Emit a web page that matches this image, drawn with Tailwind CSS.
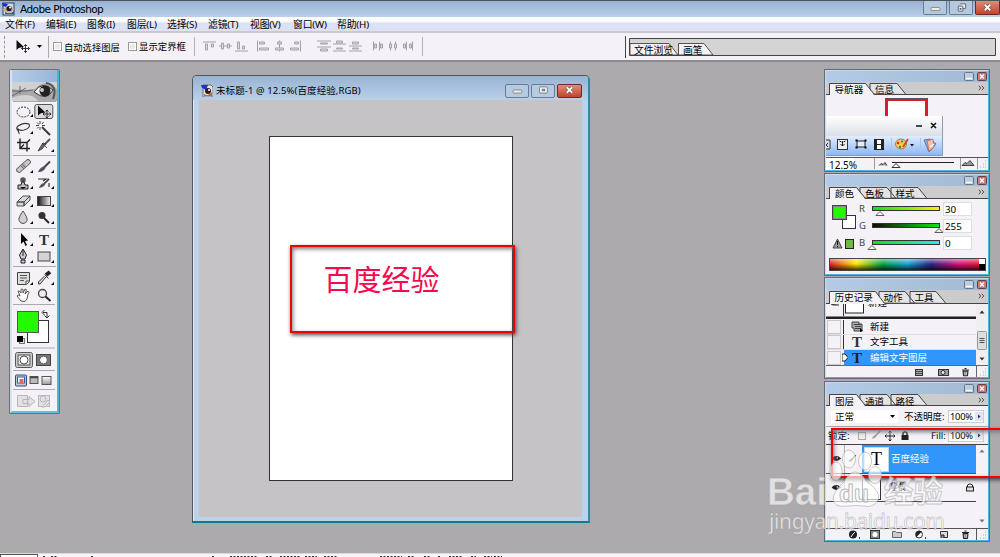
<!DOCTYPE html>
<html lang="zh-CN">
<head>
<meta charset="utf-8">
<title>Adobe Photoshop</title>
<script src="https://cdn.jsdelivr.net/npm/@tailwindcss/browser@4"></script>
</head>
<body class="h-[557px] w-[1000px] overflow-hidden bg-[#acaaac] font-['Noto_Sans','Noto_Sans_CJK_SC',sans-serif] text-[9.5px] text-black">
<svg class="absolute size-0">
  <defs>
    <linearGradient id="gm" x1="0" y1="0" x2="0" y2="1"><stop offset="0" stop-color="#fff"/><stop offset="1" stop-color="#999"/></linearGradient>
    <linearGradient id="gh"><stop offset="0" stop-color="#111"/><stop offset="1" stop-color="#f4f4f4"/></linearGradient>
    <symbol id="min" viewBox="0 0 25 13"><rect x="8" y="6.500" width="10" height="3.500" rx="1" fill="#f2ecdc" stroke="#657080" stroke-width=".8"/></symbol>
    <symbol id="max" viewBox="0 0 25 13"><rect x="8.500" y="3" width="9" height="7" rx="1" fill="#f2f2ee" stroke="#5a6472" stroke-width=".8"/><rect x="11.500" y="5.500" width="3" height="2" fill="#9ab" stroke="#5a6472" stroke-width=".7"/></symbol>
    <symbol id="cls" viewBox="0 0 25 13"><path d="M9.500 3.500l6 6M15.500 3.500l-6 6" stroke="#5a3a3a" stroke-width="3.400"/><path d="M9.500 3.500l6 6M15.500 3.500l-6 6" stroke="#fff" stroke-width="2"/></symbol>
    <symbol id="pmin" viewBox="0 0 10 9"><rect x=".5" y=".5" width="9" height="8" rx="1" fill="#bccde0" stroke="#65768c"/><path d="M2 6.500h6" stroke="#fff" stroke-width="1.500"/></symbol>
    <symbol id="pcls" viewBox="0 0 10 9"><rect x=".5" y=".5" width="9" height="8" rx="1" fill="#c97870" stroke="#64404a"/><path d="M3 2.500l4 4M7 2.500l-4 4" stroke="#fff" stroke-width="1.300"/></symbol>
    <symbol id="more" viewBox="0 0 7 6"><path d="M.8.8l2 2.200-2 2.200M3.800.8l2 2.200-2 2.200" fill="none" stroke="#444" stroke-width=".9"/></symbol>
    <symbol id="grip" viewBox="0 0 8 8"><path d="M6 1h1M4 4h1M6 4h1M1 7h1M4 7h1M6 7h1" stroke="#aaa"/></symbol>
    <symbol id="mv" viewBox="0 0 15 13"><path d="M1 0v10l2.300-2L5 7.500 8.500 7z" fill="#111"/><path d="M10 4.500v8M6 8.500h8M8.600 6L10 4.500 11.400 6M8.600 11l1.400 1.500L11.400 11M7.500 7L6 8.500 7.500 10M12.500 7L14 8.500 12.500 10" fill="none" stroke="#222" stroke-width=".9"/></symbol>
    <symbol id="eye" viewBox="0 0 10 7"><path d="M0 3Q5-2 10 3 5 8 0 3z" fill="#222"/><circle cx="6" cy="2.500" r=".8" fill="#fff"/></symbol>
    <symbol id="trash" viewBox="0 0 9 9"><path d="M1 2.500h7M3.500 1h2M2 3.500l.5 5h4l.5-5z" fill="#888" stroke="#222" stroke-width="1"/><path d="M4 4.500v3M5.500 4.500v3" stroke="#eee" stroke-width=".5"/></symbol>
    <symbol id="brush" viewBox="0 0 14 12"><path d="M13 .5L7 6.500" stroke="#444" stroke-width="2"/><path d="M7.500 5.500Q3.500 5.500 1 11q5 .5 7.500-4z" fill="#555"/></symbol>
  </defs>
</svg>

<header class="flex h-[62px] flex-col">
  <div class="flex h-[17px] items-center border-t border-[#4c535b] bg-linear-to-b from-[#98b1d1] to-[#b8d0e9] pl-[2px]">
    <svg class="h-[14px] w-[13px]" viewBox="0 0 13 14"><rect x="1" y="1" width="11" height="12" fill="#c9dcec" stroke="#345"/><path d="M0 1l6 1-2 3-3-1z" fill="#22c"/><path d="M1 8q5-8 11-1-4 7-11 1z" fill="#d9a67e"/><path d="M3 10q5 3 9-1v3H3z" fill="#2c5c92"/><circle cx="7" cy="6.500" r="2.600" fill="#18202c"/><circle cx="8" cy="5.500" r="1" fill="#fff"/></svg>
    <span class="ml-[5px] w-[100px] text-[10.500px] leading-[15px] whitespace-nowrap font-['DejaVu_Sans',sans-serif] tracking-[-0.570px]">Adobe Photoshop</span>
    <div class="ml-auto flex gap-[2px] self-start">
      <svg class="h-[14px] w-[24px] rounded-b-[2px] border border-t-0 border-[#6a7c94] bg-[#b4c9df]"><use href="#min"/></svg>
      <svg class="h-[14px] w-[24px] rounded-b-[2px] border border-t-0 border-[#6a7c94] bg-[#b4c9df]" viewBox="0 0 24 13"><path d="M11 2.500h6v5h-3M9 5h5v5.500H9z" fill="#f0f0ee" stroke="#5a6472"/><path d="M10.500 7h2v2h-2z" fill="#567"/></svg>
      <svg class="h-[14px] w-[25px] rounded-b-[2px] border border-t-0 border-[#6d2a2a] bg-linear-to-b from-[#dc8c7c] to-[#c04428]"><use href="#cls"/></svg>
    </div>
  </div>
  <nav class="flex h-[14px] items-center bg-linear-to-b from-white from-30% to-[#dce1f4] to-45% pt-[2px] pl-[5px] text-[9.800px] leading-[12px] whitespace-nowrap tracking-[-0.150px]">
    <span class="w-[41px]">文件(F)</span><span class="w-[41px]">编辑(E)</span><span class="w-[40px]">图象(I)</span><span class="w-[40px]">图层(L)</span><span class="w-[41px]">选择(S)</span><span class="w-[42px]">滤镜(T)</span><span class="w-[43px]">视图(V)</span><span class="w-[44px]">窗口(W)</span><span>帮助(H)</span>
  </nav>
  <div class="flex h-[31px] items-center border-t-[2px] border-b-[2px] border-t-[#cbc8cf] border-b-[#8d8b8e] bg-[#f5f2f7]">
    <div class="ml-[4px] h-[22px] border-l border-dashed border-[#999]"></div>
    <svg class="ml-[10px] h-[13px] w-[16px]"><use href="#mv"/></svg>
    <svg class="ml-[6px] h-[3px] w-[5px]" viewBox="0 0 5 3"><path d="M0 0h5L2.500 3z"/></svg>
    <div class="ml-[6px] h-[22px] w-px bg-[#aaa]"></div>
    <div class="ml-[4px] size-[9px] border border-[#999] bg-[#eceae8] shadow-[inset_0_0_0_1px_#fff]"></div>
    <span class="ml-[2px] w-[64px] pt-[2px] text-[9.300px] whitespace-nowrap">自动选择图层</span>
    <div class="size-[9px] border border-[#999] bg-[#eceae8] shadow-[inset_0_0_0_1px_#fff]"></div>
    <span class="ml-[2px] w-[55px] pt-[2px] text-[9.400px] whitespace-nowrap">显示定界框</span>
    <div class="h-[19px] w-px bg-[#b5b3b6]"></div>
    <svg class="h-[20px] w-[227px]" viewBox="195 36.500 227 20" fill="#dddcde" stroke="#a4a2a6">
      <path d="M203 41.500h13M219 45.500h13M235 50.500h13"/><path d="M205.500 43.500h2v6h-2zM211.500 43.500h2v3h-2zM221.500 42.500h2v6h-2zM227.500 43.500h2v4h-2zM237.500 41.500h2v7h-2zM242.500 45.500h2v3h-2z"/>
      <path d="M257.500 40v11M279.500 40v11M300.500 40v11"/><path d="M259.500 41.500h5v2h-5zM259.500 47.500h9v2h-9zM277.500 41.500h4v2h-4zM275.500 47.500h8v2h-8zM294.500 41.500h4v2h-4zM290.500 47.500h8v2h-8z"/>
      <path d="M317 40.500h14M317 46.500h14M333 43.500h13M333 50.500h13M349 45.500h13M349 50.500h13"/><path d="M320.500 42.500h7v1h-7zM320.500 48.500h7v2h-7zM336.500 40.500h6v2h-6zM336.500 47.500h6v1h-6zM352.500 41.500h6v2h-6zM352.500 47.500h6v1h-6z"/>
      <path d="M373.500 41v9M379.500 41v9M390.500 41v9M395.500 41v9M406.500 41v9M412.500 41v9"/><path d="M374.500 43.500h2v4h-2zM380.500 43.500h2v4h-2zM389.500 43.500h2v4h-2zM394.500 43.500h2v4h-2zM403.500 43.500h2v4h-2zM409.500 43.500h2v4h-2z"/>
    </svg>
    <div class="h-[19px] w-px bg-[#b5b3b6]"></div>
    <div class="ml-[202px] h-[22px] w-px bg-[#444]"></div>
    <svg class="ml-[3px] h-[19px] w-[368px]" viewBox="629 37 368 19"><path d="M629.500 38.500h366v17h-366z" fill="#d5d4d5" stroke="#444"/><path d="M630 55V43.500h39l9 11.500zM678.500 55V43.500H704l9 11.500z" fill="#f5f2f7" stroke="#444" stroke-width=".9"/><g font-size="9.800"><text x="634" y="53.500" textLength="39">文件浏览</text><text x="683" y="53.500">画笔</text></g></svg>
  </div>
</header>

<main class="relative h-[491px]">
  <!-- Toolbox -->
  <aside class="absolute top-[7px] left-[9px] flex h-[345px] w-[51px] flex-col rounded-t-[2px] border border-[#6c6f74] bg-[#f5f2f7]">
    <div class="flex grow flex-col border-r-2 border-b-2 border-l-2 border-r-[#45b6d8] border-b-[#62c0de] border-l-[#d5e4f2]">
      <div class="h-[12px] shrink-0 bg-linear-to-r from-[#b6cde8] to-[#98b5d8]"></div>
      <svg class="h-[19px] w-[45px] shrink-0" viewBox="0 0 45 19"><rect width="45" height="19" fill="#d2d1d2"/><path d="M0 7q12 2 23 0Q30-1 38 2l7 5v12H26q-4-6-12-6T0 16z" fill="#a9a8aa"/><path d="M0 9q11 1 21-1M0 14l14-8M8 4v8" stroke="#555" fill="none" stroke-width=".8"/><path d="M22 10q8-12 19-2-6 12-19 2z" fill="#eee" stroke="#333"/><circle cx="33" cy="9" r="5.500" fill="#222"/><circle cx="30" cy="8" r="2" fill="#ccc"/><path d="M34 1q12 2 7 16" fill="none" stroke="#555" stroke-width="2"/></svg>
      <div class="mx-[1px] grid grid-cols-[21px_21px] border-t border-[#aaa] pt-[1px] pb-[1px]">
        <svg class="h-[17px] w-[21px]" viewBox="0 0 21 17"><ellipse cx="10.500" cy="9" rx="6.500" ry="5" fill="none" stroke="#333" stroke-dasharray="2 1"/><path d="M20 11v3h-3z"/></svg>
        <svg class="h-[17px] w-[21px]" viewBox="0 0 21 17"><rect x=".8" y="1.500" width="18" height="14" rx="2" fill="#dcdadd" stroke="#555"/><use href="#mv" x="3" y="2.500" width="15" height="13"/></svg>
        <svg class="h-[17px] w-[21px]" viewBox="0 0 21 17"><path d="M6 11q-4-2-1-5 5-4 11-2 2 4-5 6-4 1-6-1c-2 2 2 2 1 5" fill="none" stroke="#333" stroke-width="1.100"/><path d="M20 11v3h-3z"/></svg>
        <svg class="h-[17px] w-[21px]" viewBox="0 0 21 17"><path d="M8 7l8 8" stroke="#333" stroke-width="1.800"/><path d="M6 1v3M6 7v3M2 5.500h3M8 5.500h3M3 2.500l2 2M9.500 2L8 4M3 8.500l1.500-1.500" stroke="#444"/></svg>
        <svg class="h-[17px] w-[21px]" viewBox="0 0 21 17"><path d="M7 1.500v10h10M4 5.500h10v9M14 5.500l3-3M7 11.500l4-4" fill="none" stroke="#222" stroke-width="1.400"/></svg>
        <svg class="h-[17px] w-[21px]" viewBox="0 0 21 17"><path d="M16 2l-5 5" stroke="#555" stroke-width="2"/><path d="M8 6l5 5M12 7l-4 5-4 2 3-5 2-3z" fill="#666" stroke="#333" stroke-width=".8"/><path d="M20 12v3h-3z"/></svg>
      </div>
      <div class="mx-[1px] grid grid-cols-[21px_21px] border-t border-[#aaa] pt-[2px] pb-[2px]">
        <svg class="h-[17px] w-[21px]" viewBox="0 0 21 17"><path d="M6 12l9-8" stroke="#555" stroke-width="5.600" stroke-linecap="round"/><path d="M6 12l9-8" stroke="#c8c7c9" stroke-width="4" stroke-linecap="round"/><path d="M9 9.500l3-3" stroke="#666" stroke-width="4" stroke-dasharray="1 1"/><path d="M20 12v3h-3z"/></svg>
        <svg class="h-[17px] w-[21px]" viewBox="0 0 21 17"><use href="#brush" x="3" y="3" width="14" height="12"/><path d="M20 12v3h-3z"/></svg>
        <svg class="h-[17px] w-[21px]" viewBox="0 0 21 17"><circle cx="10" cy="5" r="2.800" fill="#555"/><path d="M9 7h2l1 3h3v4H5v-4h3z" fill="#bbb" stroke="#222"/><path d="M7 12h6l-3 2z"/><path d="M20 11v3h-3z"/></svg>
        <svg class="h-[17px] w-[21px]" viewBox="0 0 21 17"><use href="#brush" x="4" y="3" width="12" height="11"/><path d="M4 4h8l-3 2M15 8v4" fill="none" stroke="#333" stroke-width="1.200"/><path d="M20 11v3h-3z"/></svg>
        <svg class="h-[17px] w-[21px]" viewBox="0 0 21 17"><path d="M4 10l6-6h7l-6 6zM4 10h7v4H4zM11 14v-4l6-6v4z" fill="#d8d7d9" stroke="#444" stroke-width=".9"/><path d="M20 12v3h-3z"/></svg>
        <svg class="h-[17px] w-[21px]" viewBox="0 0 21 17"><rect x="3.500" y="4.500" width="13" height="9" fill="url(#gh)" stroke="#444"/><path d="M20 12v3h-3z"/></svg>
        <svg class="h-[17px] w-[21px]" viewBox="0 0 21 17"><path d="M10 2q-5 7-4 9.500 1 3 4 3t4-3Q15 9 10 2z" fill="#d0cfd1" stroke="#555"/><path d="M20 12v3h-3z"/></svg>
        <svg class="h-[17px] w-[21px]" viewBox="0 0 21 17"><circle cx="8" cy="6.500" r="3.500" fill="#333"/><path d="M10 9l5 5" stroke="#222" stroke-width="1.800"/><path d="M20 12v3h-3z"/></svg>
      </div>
      <div class="mx-[1px] grid grid-cols-[21px_21px] border-t border-[#aaa] pt-[2px] pb-[1px]">
        <svg class="h-[17px] w-[21px]" viewBox="0 0 21 17"><path d="M8 2v11l2.500-2.500L12.500 15l1.500-1-2-4 3-.5z"/><path d="M20 12v3h-3z"/></svg>
        <svg class="h-[17px] w-[21px]" viewBox="0 0 21 17"><text x="5" y="14" font-size="15" font-weight="700" fill="#333" font-family="Liberation Serif">T</text><path d="M20 12v3h-3z"/></svg>
        <svg class="h-[17px] w-[21px]" viewBox="0 0 21 17"><path d="M10 1l3.500 6-1.500 4H8L6.500 7zM8 12h4v3H8z" fill="#ccc" stroke="#222"/><path d="M10 2v6" stroke="#222"/><path d="M20 12v3h-3z"/></svg>
        <svg class="h-[17px] w-[21px]" viewBox="0 0 21 17"><rect x="4" y="4" width="12" height="9" fill="#d4d3d5" stroke="#444"/><path d="M20 12v3h-3z"/></svg>
      </div>
      <div class="mx-[1px] grid grid-cols-[21px_21px] border-t border-[#aaa] pt-[3px]">
        <svg class="h-[17px] w-[21px]" viewBox="0 0 21 17"><path d="M4.500 2.500h12v9l-3 3h-9z" fill="#ddd" stroke="#444"/><path d="M7 5.500h7M7 8h7M7 10.500h4M13 14v-3h3" stroke="#555" fill="none"/><path d="M20 12v3h-3z"/></svg>
        <svg class="h-[17px] w-[21px]" viewBox="0 0 21 17"><path d="M12 5l4-3" stroke="#222" stroke-width="4"/><path d="M10.500 4.500l4 4M12 7l-6 7H4.500v-2l6-6" fill="#ddd" stroke="#333"/><path d="M20 12v3h-3z"/></svg>
        <svg class="h-[17px] w-[21px]" viewBox="0 0 21 17"><path d="M8 14L4 9q1-2 3 0L5 4q1-1 3 2V2.500q1-1 2 0V6l2-4q2 0 1 2l-1 3 3-3q2 1 0 3l-1 5-2 2.500z" fill="#fff" stroke="#444" stroke-width=".9"/></svg>
        <svg class="h-[17px] w-[21px]" viewBox="0 0 21 17"><circle cx="8.500" cy="6.500" r="4" fill="#eee" stroke="#444" stroke-width="1.300"/><path d="M11.500 9.500l5 4.500" stroke="#222" stroke-width="2"/></svg>
      </div>
      <svg class="h-[107px] w-[45px] shrink-0" viewBox="12 304 45 107">
        <path d="M13 304.500h42M13 348h42M13 370.500h42M13 389.500h42" stroke="#aaa"/>
        <rect x="27.500" y="320.500" width="21" height="22" fill="#fff" stroke="#333"/><rect x="17.500" y="311.500" width="21" height="21" fill="#24f900" stroke="#555"/>
        <path d="M43 312.500h4v5M44.500 310l-2.500 2.500 2.500 2.500M44.500 315.500l2.500 2.500 2.500-2.500" fill="none" stroke="#333"/><rect x="19.500" y="338.500" width="5" height="5" fill="#ddd" stroke="#777"/><rect x="17" y="336" width="6" height="6"/>
        <rect x="15.500" y="352.500" width="17" height="15" rx="2" fill="#cfcdd0" stroke="#555"/><rect x="18" y="355" width="12" height="10" fill="#e8e8e8" stroke="#555"/><circle cx="24" cy="360" r="4" fill="#fff" stroke="#555"/>
        <rect x="36.500" y="354.500" width="14" height="11" fill="#777" stroke="#444"/><circle cx="43.500" cy="360" r="4" fill="#fff" stroke="#555"/>
        <rect x="15.500" y="375" width="11" height="11" rx="1" fill="#b7c9dc" stroke="#446"/><rect x="17.500" y="377" width="7" height="6" fill="#fff" stroke="#2460b8"/><rect x="19.500" y="379" width="4" height="4" fill="#e16d52"/>
        <rect x="30" y="376.500" width="8" height="7" fill="#bbb" stroke="#555"/><path d="M30 377.500h8" stroke="#444" stroke-width="1.500"/><rect x="42" y="376.500" width="9" height="8" fill="url(#gm)" stroke="#555"/>
        <g stroke="#b9b7bb" fill="#e1e0e3"><path d="M17.500 395.500h10v11h-10zM23 399.500h6v-3l6 5-6 5v-3h-6z"/><rect x="38.500" y="395.500" width="11" height="11"/><circle cx="43" cy="399" r="3"/><path d="M42 407l6-7 2 2-5 5z"/></g>
      </svg>
    </div>
  </aside>

  <!-- Document window -->
  <section class="absolute top-[13px] left-[192px] flex h-[448px] w-[398px] flex-col rounded-t-[5px] border border-r-2 border-b-2 border-[#50565c] border-r-[#2b8c9d] border-b-[#147886] bg-[#bbd1ec] shadow-[inset_1px_1px_0_#e0ebf7]">
    <div class="flex h-[24px] shrink-0 items-center rounded-t-[4px] bg-linear-to-b from-[#99b3d2] to-[#b9d0ea] px-[8px] pt-[5px]">
      <svg class="h-[13px] w-[12px]" viewBox="0 0 12 13"><path d="M2 1h8l2 2v10H2z" fill="#e6e2dc" stroke="#555" stroke-width=".8"/><path d="M0 1l7 0-2 5-4-2z" fill="#2630dc"/><circle cx="7" cy="7" r="3" fill="#222"/><path d="M3 10q4 3 8-2v4H3z" fill="#b8682f"/><circle cx="8" cy="6" r="1" fill="#fff"/></svg>
      <span class="ml-[3px] text-[9.500px] leading-[15px] whitespace-nowrap tracking-[0.100px]">未标题-1 @ 12.5%(百度经验,RGB)</span>
      <div class="mr-[-2px] ml-auto flex gap-[2px]">
        <svg class="h-[14px] w-[24px] rounded-[2px] border border-[#6a7c94] bg-[#b6cbe1]"><use href="#min" y="-1"/></svg>
        <svg class="h-[14px] w-[24px] rounded-[2px] border border-[#6a7c94] bg-[#b6cbe1]"><use href="#max" y="-1"/></svg>
        <svg class="h-[14px] w-[25px] rounded-[2px] border border-[#6d2a2a] bg-linear-to-b from-[#dc8c7c] to-[#c04428]"><use href="#cls" y="-1"/></svg>
      </div>
    </div>
    <div class="mx-[6px] mb-[4px] flex grow bg-[#c5c3c5] pt-[36px] pl-[70px]">
      <div class="h-[345px] w-[244px] border border-[#333] bg-white pt-[119px] pl-[53.500px] font-['Noto_Sans_CJK_SC',sans-serif] text-[29px] leading-[44px] text-[#f8084d]">百度经验</div>
    </div>
  </section>
  <div class="absolute top-[183px] left-[290px] h-[88px] w-[225px] border-[2.500px] border-[#f20000] shadow-[1px_2px_4px_#444,inset_1px_2px_4px_#777]"></div>

  <!-- Navigator -->
  <section class="absolute top-[7px] left-[824px] flex h-[103px] w-[166px] flex-col border border-[#666a70] bg-[#f5f2f7]">
    <div class="flex grow flex-col border border-[#49b8dc] border-t-[#c8daee] border-l-[#c8dded]">
      <div class="flex h-[11px] shrink-0 items-center justify-end gap-[3px] bg-linear-to-r from-[#b3cbe7] to-[#a3b9d2] pr-px"><svg class="h-[9px] w-[10px]"><use href="#pmin"/></svg><svg class="h-[9px] w-[10px]"><use href="#pcls"/></svg></div>
      <svg class="h-[13px] w-[162px] shrink-0" viewBox="826 82 162 13"><path d="M826 82h162v13H826z" fill="#cdcccd"/><path d="M826 94.500h162" fill="none" stroke="#444"/><path d="M870 94V83.500h27l9 11z" fill="#e4e3e5" stroke="#444"/><path d="M829 95V83.500h36l9 11.500z" fill="#f5f2f7"/><path d="M829.500 95V83.500h36l9 11" fill="none" stroke="#444"/><g font-size="9.600"><text x="834.500" y="93">导航器</text><text x="875" y="93">信息</text></g><use href="#more" x="978" y="85" width="7" height="6"/></svg>
      <div class="flex h-[62px] flex-col">
        <div class="ml-[60px] h-[21px] w-[41px] shrink-0 pt-[4px]"><div class="h-[17px] border-[2px] border-b-0 border-[#d32028] bg-white shadow-[0_0_0_1px_#555]"></div></div>
        <div class="z-10 flex h-[40px] w-[117px] shrink-0 flex-col border-r border-b border-[#8a9bb8]">
          <svg class="h-[20px] w-[116px] bg-linear-to-b from-white to-[#dcdfe9]" viewBox="826 116.500 116 20"><path d="M916 126.500h6M931 123.500l5 5M936 123.500l-5 5" stroke="#111" stroke-width="1.500"/></svg>
          <svg class="h-[19px] w-[116px] bg-linear-to-b from-[#e1edff] to-[#8db8f6]" viewBox="826 136 116 19"><path d="M826 140h4v9h-4M828 143l-2 2 2 2" fill="#ddd" stroke="#333"/><rect x="837.500" y="139.500" width="10" height="10" fill="#eee" stroke="#333"/><path d="M842.500 141v5M840.500 144l2 2 2-2M839.500 141l2 1M845.500 141l-2 1" stroke="#222" fill="none"/><rect x="857" y="141" width="8" height="6" fill="#e7eefb" stroke="#222"/><path d="M855.500 139.500h2v2h-2zM864.500 139.500h2v2h-2zM855.500 146.500h2v2h-2zM864.500 146.500h2v2h-2z"/><path d="M874 139h10v11h-10z" fill="#222"/><path d="M877 140h4v4h-4zM877 145h4v4h-4z" fill="#fff"/><path d="M891.500 138v15M920.500 138v15" stroke="#a9c5ef"/><ellipse cx="901" cy="144" rx="5.500" ry="5" fill="#ffc45b" stroke="#a3642c" stroke-width=".8"/><circle cx="898" cy="143" r="1.200" fill="#d72323"/><circle cx="902" cy="141.500" r="1.100" fill="#287be0"/><circle cx="900" cy="147" r="1.200" fill="#2b972d"/><path d="M908 139l-5 8" stroke="#bd541d" stroke-width="1.700"/><path d="M910 144h4l-2 2.500z"/><path d="M924 140l6-1 6 5-7 8z" fill="#8cacec" stroke="#5676b7"/><path d="M927 141l6-2 1 8-5 4z" fill="#f4c0a2" stroke="#be6653" stroke-width=".8"/><path d="M930 147l4-3" stroke="#fff" stroke-width="1.500"/></svg>
        </div>
      </div>
      <div class="flex h-[13px] items-start overflow-hidden border-t border-[#555]">
        <div class="h-[13px] w-[28px] bg-white pl-[3px] text-[10px] leading-[14px]">12.5%</div><div class="h-[13px] w-[20px]"></div>
        <svg class="h-[12px] w-[114px]" viewBox="874 159 114 12"><path d="M874.500 159v11M960.500 159v11M977.500 159v11" stroke="#999"/><path d="M879 166.500l2-2 2 1 2-2 2 3M962 166.500l3-3 2 1 3-3 4 5z" fill="#999" stroke="#333" stroke-width=".9"/><path d="M892 163.500h62" stroke="#222"/><path d="M892 168.500l4-4 4 4z" fill="#fff" stroke="#333"/><use href="#grip" x="979" y="161" width="8" height="8"/></svg>
      </div>
    </div>
  </section>

  <!-- Color -->
  <section class="absolute top-[111px] left-[824px] flex h-[103px] w-[166px] flex-col border border-[#666a70] bg-[#f5f2f7]">
    <div class="flex grow flex-col border border-[#49b8dc] border-t-[#c8daee] border-l-[#c8dded]">
      <div class="flex h-[11px] shrink-0 items-center justify-end gap-[3px] bg-linear-to-r from-[#b3cbe7] to-[#a3b9d2] pr-px"><svg class="h-[9px] w-[10px]"><use href="#pmin"/></svg><svg class="h-[9px] w-[10px]"><use href="#pcls"/></svg></div>
      <svg class="h-[13px] w-[162px] shrink-0" viewBox="826 186 162 13"><path d="M826 186h162v13H826z" fill="#cdcccd"/><path d="M826 198.500h162" stroke="#444"/><path d="M891 198V187.500h27l9 11zM860 198V187.500h27l9 11z" fill="#e4e3e5" stroke="#444"/><path d="M829 199v-11.500h27l9 11.500z" fill="#f5f2f7"/><path d="M829.500 199v-11.500h27l9 11" fill="none" stroke="#444"/><g font-size="9.500"><text x="835" y="197">颜色</text><text x="865" y="197">色板</text><text x="895.500" y="197">样式</text></g><use href="#more" x="978" y="189" width="7" height="6"/></svg>
      <div class="flex h-[56px] pt-[3px]">
        <svg class="h-[53px] w-[30px] shrink-0" viewBox="826 202 30 53"><rect x="842.500" y="215.500" width="13" height="13" fill="#fff" stroke="#333"/><rect x="832.500" y="205.500" width="14" height="14" fill="#24f900" stroke="#444"/><rect x="833.500" y="206.500" width="12" height="12" fill="none" stroke="#888"/><path d="M833 248l4.500-9 4.500 9z" fill="#999" stroke="#444"/><path d="M837.500 241v4M837.500 246v1" stroke="#111"/><rect x="845.500" y="239.500" width="8" height="9" fill="#6bb84d" stroke="#222"/></svg>
        <div class="flex flex-col gap-[3px]">
          <div class="flex h-[14px] items-center"><span class="w-[15px] pl-[3px] leading-[14px] text-[#444]">R</span><svg class="h-[14px] w-[72px] overflow-visible" viewBox="0 0 72 14"><defs><linearGradient id="r1"><stop offset="0" stop-color="#0ae319"/><stop offset="1" stop-color="#ffef00"/></linearGradient></defs><rect x="1.500" y="4.500" width="67" height="4" fill="url(#r1)" stroke="#333"/><path d="M5 13.500l4-4 4 4z" fill="#fff" stroke="#333" stroke-width=".8"/></svg><div class="h-[14px] w-[29px] border border-[#dedde3] bg-white pl-px text-[9.800px] leading-[13px]">30</div></div>
          <div class="flex h-[14px] items-center"><span class="w-[15px] pl-[3px] leading-[14px] text-[#444]">G</span><svg class="h-[14px] w-[72px] overflow-visible" viewBox="0 0 72 14"><defs><linearGradient id="g1"><stop offset="0" stop-color="#160505"/><stop offset="1" stop-color="#0ee91a"/></linearGradient></defs><rect x="1.500" y="4.500" width="67" height="4" fill="url(#g1)" stroke="#333"/><path d="M64 13.500l4-4 4 4z" fill="#fff" stroke="#333" stroke-width=".8"/></svg><div class="h-[14px] w-[29px] border border-[#dedde3] bg-white pl-px text-[9.800px] leading-[13px]">255</div></div>
          <div class="flex h-[14px] items-center"><span class="w-[15px] pl-[3px] leading-[14px] text-[#444]">B</span><svg class="h-[14px] w-[72px] overflow-visible" viewBox="0 0 72 14"><defs><linearGradient id="b1"><stop offset="0" stop-color="#0ae319"/><stop offset="1" stop-color="#2ee6ee"/></linearGradient></defs><rect x="1.500" y="4.500" width="67" height="4" fill="url(#b1)" stroke="#333"/><path d="M-3 13.500l4-4 4 4z" fill="#fff" stroke="#333" stroke-width=".8"/></svg><div class="h-[14px] w-[29px] border border-[#dedde3] bg-white pl-px text-[9.800px] leading-[13px]">0</div></div>
        </div>
      </div>
      <div class="mt-[3px] ml-[3px] flex h-[13px] w-[157px] border border-[#444] bg-[linear-gradient(to_bottom,#ffffff80,transparent_45%,#000000c0),linear-gradient(to_right,#e8232b,#ffea00_17%,#08a44a_34%,#16a5d8_50%,#2b2886_65%,#e0107f_83%,#e01f26)]"><div class="ml-auto h-[11px] w-[6px] bg-linear-to-b from-white from-50% to-black to-50%"></div></div>
    </div>
  </section>

  <!-- History -->
  <section class="absolute top-[215px] left-[824px] flex h-[102px] w-[166px] flex-col border border-[#666a70] bg-[#f5f2f7]">
    <div class="flex grow flex-col border border-[#49b8dc] border-t-[#c8daee] border-l-[#c8dded]">
      <div class="flex h-[11px] shrink-0 items-center justify-end gap-[3px] bg-linear-to-r from-[#b3cbe7] to-[#a3b9d2] pr-px"><svg class="h-[9px] w-[10px]"><use href="#pmin"/></svg><svg class="h-[9px] w-[10px]"><use href="#pcls"/></svg></div>
      <svg class="h-[14px] w-[162px] shrink-0" viewBox="826 290 162 14"><path d="M826 290h162v14H826z" fill="#cdcccd"/><path d="M826 303.500h162" stroke="#444"/><path d="M910 303V291.500h26l10 12zM879 303V291.500h26l10 12z" fill="#e4e3e5" stroke="#444"/><path d="M829 304v-12.500h46l10 12.500z" fill="#f5f2f7"/><path d="M829.500 304v-12.500h46l9 12" fill="none" stroke="#444"/><g font-size="9.600"><text x="834.500" y="301">历史记录</text><text x="883.500" y="301">动作</text><text x="914.500" y="301">工具</text></g><use href="#more" x="978" y="293" width="7" height="6"/></svg>
      <div class="flex h-[61px]">
        <div class="flex w-[150px] flex-col">
          <div class="flex h-[13px] items-start overflow-hidden border-b border-[#888]">
            <svg class="h-[12px] w-[40px]" viewBox="0 0 40 12"><path d="M5 0l2 1h6" stroke="#333"/><path d="M17.500 0v12" stroke="#333"/><rect x="19.500" y="-2" width="18" height="11" fill="#fff" stroke="#222"/></svg><span class="mt-[-8.500px] ml-[2px] leading-[13px]">新建</span>
          </div>
          <div class="h-[3px] border-t-2 border-[#222]"></div>
          <div class="flex h-[15px] items-center border-b border-[#ddd]"><div class="mx-[1px] h-[14px] w-[14px] border border-[#c9c7ca]"></div><div class="ml-[1px] h-full w-px bg-[#333]"></div><svg class="ml-[7px] h-[12px] w-[14px]" viewBox="0 0 14 12"><path d="M1 1h7v2h3v7H3V7H1z" fill="#aaa" stroke="#444"/><path d="M3 3.500h7M4 5.500h6M4 7.500h6" stroke="#444"/><path d="M9 7v4l3-1z"/></svg><span class="ml-[5px] leading-[14px]">新建</span></div>
          <div class="flex h-[15px] items-center border-b border-[#ddd]"><div class="mx-[1px] h-[14px] w-[14px] border border-[#c9c7ca]"></div><div class="ml-[1px] h-full w-px bg-[#333]"></div><span class="ml-[8px] w-[18px] font-['Liberation_Serif',serif] text-[15px] leading-[14px] font-bold text-[#333]">T</span><span class="leading-[14px]">文字工具</span></div>
          <div class="flex h-[15px] items-center"><div class="mx-[1px] h-[14px] w-[14px] border border-[#c9c7ca]"></div><svg class="h-[15px] w-[6px] bg-[linear-gradient(to_right,#f5f2f7_30%,#3096fb_30%)]" viewBox="0 0 6 15"><path d="M0 4h3l3 3.500L3 11H0z" fill="#fff" stroke="#222"/></svg><div class="flex h-[15px] grow items-center bg-[#3096fb]"><span class="w-[22px] pl-[4px] font-['Liberation_Serif',serif] text-[15px] leading-[14px] font-bold text-[#123]">T</span><span class="leading-[14px] text-white">编辑文字图层</span></div></div>
        </div>
        <svg class="h-[61px] w-[12px]" viewBox="976 304 12 61"><path d="M976 304h12v61h-12z" fill="#f0eef1"/><path d="M979.500 313.500h5l-2.500-3zM979.500 357.500h5l-2.500 3z" fill="#333"/><rect x="977.500" y="331.500" width="9" height="18" rx="1" fill="#dddde0" stroke="#999"/><path d="M979.500 338.500h5M979.500 340.500h5M979.500 342.500h5" stroke="#555"/></svg>
      </div>
      <svg class="h-[12px] w-[162px]" viewBox="826 365 162 12"><path d="M826 365.500h162M976.500 366v11" stroke="#666"/><rect x="915.500" y="369.500" width="7" height="6" fill="#aaa" stroke="#333"/><path d="M916 371.500h6M916 373.500h6" stroke="#333" stroke-width=".8"/><rect x="938.500" y="369.500" width="10" height="6" fill="#999" stroke="#333"/><circle cx="943" cy="372.500" r="2" fill="#eee" stroke="#333"/><use href="#trash" x="961" y="367.500" width="9" height="9"/><use href="#grip" x="979" y="368" width="8" height="8"/></svg>
    </div>
  </section>

  <!-- Layers -->
  <section class="absolute top-[319px] left-[824px] flex h-[161px] w-[166px] flex-col border border-[#666a70] bg-[#f5f2f7]">
    <div class="flex grow flex-col border border-[#49b8dc] border-t-[#c8daee] border-l-[#c8dded]">
      <div class="flex h-[11px] shrink-0 items-center justify-end gap-[3px] bg-linear-to-r from-[#b3cbe7] to-[#a3b9d2] pr-px"><svg class="h-[9px] w-[10px]"><use href="#pmin"/></svg><svg class="h-[9px] w-[10px]"><use href="#pcls"/></svg></div>
      <svg class="h-[12px] w-[162px] shrink-0" viewBox="826 394 162 12"><path d="M826 394h162v12H826z" fill="#cdcccd"/><path d="M826 405.500h162" stroke="#444"/><path d="M891 405V394.500h27l9 11zM860 405V394.500h27l9 11z" fill="#e4e3e5" stroke="#444"/><path d="M829 406v-11.500h27l9 11.500z" fill="#f5f2f7"/><path d="M829.500 406v-11.500h27l9 11" fill="none" stroke="#444"/><g font-size="9.500"><text x="835" y="404.500">图层</text><text x="865" y="404.500">通道</text><text x="895.500" y="404.500">路径</text></g><use href="#more" x="978" y="397" width="7" height="6"/></svg>
      <div class="flex h-[21px] shrink-0 items-center border-b border-[#aaa] pl-[5px]">
        <div class="flex h-[13px] w-[67px] items-center justify-between bg-white pr-[3px] pl-[4px] leading-[13px]"><span>正常</span><svg class="h-[3px] w-[5px]" viewBox="0 0 5 3"><path d="M0 0h5L2.500 3z"/></svg></div>
        <span class="ml-[6px] w-[44px] leading-[13px] whitespace-nowrap">不透明度:</span>
        <div class="flex h-[13px] w-[36px] items-center justify-between overflow-hidden border border-[#ccc] bg-white pl-px leading-[11px]"><span class="w-[25px] text-[9.300px] tracking-[-0.200px]">100%</span><svg class="h-[9px] w-[8px] bg-[#dfe3f2]" viewBox="0 0 8 9"><path d="M3 2.500l2.500 2L3 6.500z" fill="#335"/></svg></div>
      </div>
      <div class="flex h-[18px] shrink-0 items-center border-b border-[#444] pl-[2px]">
        <span class="w-[27px] leading-[13px] whitespace-nowrap">锁定:</span>
        <svg class="h-[12px] w-[58px]" viewBox="855 430 58 12"><rect x="858.500" y="432.500" width="7" height="7" fill="#eee" stroke="#aaa"/><use href="#brush" x="871" y="430" width="10" height="10" opacity=".5"/><path d="M890 431v10M885 436h10M888.500 432.500L890 431l1.500 1.500M888.500 439.500L890 441l1.500-1.500M886.500 434.500L885 436l1.500 1.500M893.500 434.500L895 436l-1.500 1.500" fill="none" stroke="#222"/><path d="M903 435v-2q2-2.500 4 0v2" fill="none" stroke="#222" stroke-width="1.400"/><rect x="901.500" y="435" width="7" height="5" fill="#222"/></svg>
        <span class="ml-[18px] w-[17px] leading-[13px]">Fill:</span>
        <div class="flex h-[13px] w-[36px] items-center justify-between overflow-hidden border border-[#ccc] bg-white pl-px leading-[11px]"><span class="w-[25px] text-[9.300px] tracking-[-0.200px]">100%</span><svg class="h-[9px] w-[8px] bg-[#dfe3f2]" viewBox="0 0 8 9"><path d="M3 2.500l2.500 2L3 6.500z" fill="#335"/></svg></div>
      </div>
      <div class="flex grow">
        <div class="flex w-[150px] flex-col">
          <div class="flex h-[29px] shrink-0 items-center border-b border-[#555]">
            <svg class="h-full w-[36px]" viewBox="826 445 36 29"><use href="#eye" x="831" y="456" width="10" height="7"/><path d="M844.500 445v29" stroke="#aaa"/><use href="#brush" x="848" y="454" width="9" height="10"/></svg>
            <div class="flex h-full grow items-center bg-[#3096fb] pl-[2px]"><div class="flex size-[25px] items-center justify-center border border-[#b9d9f8] bg-white font-['Liberation_Serif',serif] text-[18px] leading-[22px]">T</div><span class="ml-[2px] pt-px text-white">百度经验</span></div>
          </div>
          <div class="flex h-[28px] shrink-0 items-center border-b border-[#444]">
            <svg class="h-full w-[36px]" viewBox="826 474 36 28"><use href="#eye" x="831" y="485" width="10" height="7"/><path d="M844.500 474v28" stroke="#aaa"/></svg>
            <div class="h-[25px] w-[19px] border border-[#333] bg-white"></div><span class="ml-[6px] italic">背景</span>
            <svg class="mr-[1px] ml-auto h-[9px] w-[10px]" viewBox="0 0 10 9"><path d="M2.500 4V2q2.500-2.500 5 0v2" fill="none" stroke="#222"/><rect x="1.500" y="4" width="7" height="4" fill="#ddd" stroke="#222"/></svg>
          </div>
        </div>
        <svg class="h-[82px] w-[12px]" viewBox="976 446 12 82"><path d="M979.500 453.500h5l-2.500-3zM979.500 520.500h5l-2.500 3z" fill="#777"/></svg>
      </div>
      <svg class="h-[12px] w-[162px] shrink-0" viewBox="826 528 162 12"><path d="M826 528.500h162M976.500 529v11" stroke="#555"/><circle cx="853" cy="534.500" r="4" fill="#222"/><path d="M851 537l2-3 2-2" stroke="#fff"/><path d="M859 538h1M925 538h1" stroke="#111" stroke-width="1.500"/><rect x="870.500" y="530.500" width="9" height="8" fill="#888" stroke="#333"/><circle cx="875" cy="534.500" r="2.500" fill="#fff"/><path d="M892.500 531.500h3l1 1h5v5h-9z" fill="#ccc" stroke="#666"/><circle cx="919" cy="534.500" r="3.500" fill="#fff" stroke="#333"/><path d="M916 537.500l6-6q-4-2-6 1z" fill="#222"/><path d="M940.500 531.500h7v6h-4l-3-3z" fill="#ddd" stroke="#333"/><path d="M941 538v-3h3v3" stroke="#222" fill="#888"/><use href="#trash" x="961" y="530" width="9" height="9"/><use href="#grip" x="979" y="531" width="8" height="8"/></svg>
    </div>
  </section>
  <div class="absolute top-[366px] left-[831px] h-[50px] w-[175px] border-[2.500px] border-[#f20000] shadow-[1px_2px_4px_#444,inset_1px_2px_4px_#777]"></div>

  <!-- Watermark -->
  <svg class="absolute top-[378px] left-[760px] h-[113px] w-[200px]" viewBox="760 440 200 113" font-family="Liberation Sans, Noto Sans CJK SC, sans-serif">
    <g fill="#fff" fill-opacity=".66" stroke="#a8a6aa" stroke-opacity=".6">
      <text x="767" y="505" font-size="39" font-weight="700" textLength="60" lengthAdjust="spacingAndGlyphs">Bai</text>
      <ellipse cx="836" cy="471" rx="6" ry="9"/><ellipse cx="849" cy="459" rx="6.500" ry="9"/><ellipse cx="865" cy="461" rx="6.500" ry="9"/><ellipse cx="875" cy="475" rx="6.500" ry="8.500"/><path d="M855 472q6 0 11 9 16 11 12 19-4 8-14 6-8-1-17 0-13 2-14-7 0-7 11-17 5-10 11-10z"/>
      <text x="884" y="502" font-size="29.500" font-weight="700">经验</text>
    </g>
    <text x="839" y="502" font-size="24" fill="#fff" fill-opacity=".7" stroke="#999" stroke-opacity=".7" font-weight="700" textLength="30" lengthAdjust="spacingAndGlyphs">du</text>
    <text x="769" y="529" font-size="21" fill="#fff" fill-opacity=".8" stroke="#999" stroke-opacity=".55" stroke-width=".8" font-family="Noto Sans" textLength="176">jingyan.baidu.com</text>
  </svg>
</main>

<footer class="flex h-[4px] overflow-hidden border-t border-[#dcd9de] bg-[#f8f2f7]">
  <div class="h-[8px] w-[38px] border border-[#555] bg-white"></div>
  <svg class="h-[3px] w-[480px]" viewBox="38 554 480 3"><path d="M43 556.500h3M51 556.500h7M91 556.500h2M212 556.500h2M230 556.500h28M266 556.500h6M280 556.500h20M305 556.500h12M324 556.500h14M380 556.500h22M408 556.500h6M424 556.500h7M438 556.500h3M449 556.500h13M471 556.500h5M484 556.500h8M494 556.500h8" stroke="#333" stroke-dasharray="2 1.500"/></svg>
</footer>
</body>
</html>
